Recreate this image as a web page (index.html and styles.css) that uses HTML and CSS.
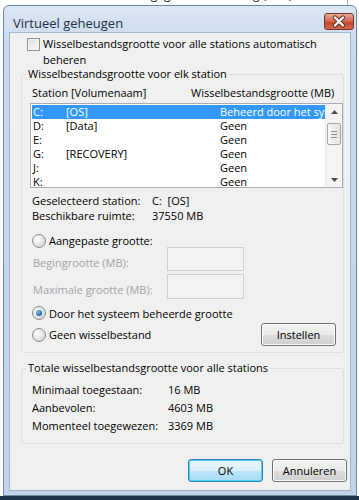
FILE: index.html
```html
<!DOCTYPE html>
<html lang="nl">
<head>
    <meta charset="UTF-8">
    <title>Virtueel geheugen</title>
    <link rel="stylesheet" href="styles.css">
</head>
<body>
    <div class="backdrop"><span>Prestatie van gegevensuitvoering (DEP)</span></div>

    <div class="window">
        <div class="titlebar">
            <span class="title">Virtueel geheugen</span>
            <span class="close">
                <svg width="28" height="15" viewBox="0 0 28 15">
                    <path d="M10 3.5 L18 11.5 M18 3.5 L10 11.5" stroke="#5a2a20" stroke-width="4.2" stroke-linecap="round"/>
                    <path d="M10 3.5 L18 11.5 M18 3.5 L10 11.5" stroke="#fff" stroke-width="2.4" stroke-linecap="round"/>
                </svg>
            </span>
        </div>

        <div class="client">
            <div class="check-row">
                <span class="checkbox"></span>
                <span>Wisselbestandsgrootte voor alle stations automatisch<br>beheren</span>
            </div>

            <fieldset class="group">
                <legend>Wisselbestandsgrootte voor elk station</legend>
                <div class="group-body">
                    <div class="list-head">
                        <span class="col-station">Station [Volumenaam]</span>
                        <span>Wisselbestandsgrootte (MB)</span>
                    </div>
                    <div class="listbox">
                        <div class="rows">
                            <div class="row selected"><span class="drive">C:</span><span class="name">[OS]</span><span>Beheerd door het systeem</span></div>
                            <div class="row"><span class="drive">D:</span><span class="name">[Data]</span><span>Geen</span></div>
                            <div class="row"><span class="drive">E:</span><span class="name"></span><span>Geen</span></div>
                            <div class="row"><span class="drive">G:</span><span class="name">[RECOVERY]</span><span>Geen</span></div>
                            <div class="row"><span class="drive">J:</span><span class="name"></span><span>Geen</span></div>
                            <div class="row"><span class="drive">K:</span><span class="name"></span><span>Geen</span></div>
                        </div>
                        <div class="scrollbar">
                            <div class="arrow">
                                <svg width="7" height="4" viewBox="0 0 7 4"><path d="M0 4 L3.5 0 L7 4 Z" fill="#4d4d4d"/></svg>
                            </div>
                            <div class="thumb"><i></i><i></i><i></i></div>
                            <div class="track"></div>
                            <div class="arrow">
                                <svg width="7" height="4" viewBox="0 0 7 4"><path d="M0 0 L7 0 L3.5 4 Z" fill="#4d4d4d"/></svg>
                            </div>
                        </div>
                    </div>

                    <div class="info">
                        <span>Geselecteerd station:</span><span>C:&nbsp;&nbsp;[OS]</span>
                        <span>Beschikbare ruimte:</span><span>37550 MB</span>
                    </div>

                    <div class="radio-row first">
                        <span class="radio"></span>
                        <span>Aangepaste grootte:</span>
                    </div>
                    <div class="size-row">
                        <span class="size-label">Begingrootte (MB):</span>
                        <span class="textbox"></span>
                    </div>
                    <div class="size-row second">
                        <span class="size-label">Maximale grootte (MB):</span>
                        <span class="textbox"></span>
                    </div>
                    <div class="radio-row system">
                        <span class="radio checked"></span>
                        <span>Door het systeem beheerde grootte</span>
                    </div>
                    <div class="radio-row none">
                        <span class="radio"></span>
                        <span class="grow">Geen wisselbestand</span>
                        <button class="btn set">Instellen</button>
                    </div>
                </div>
            </fieldset>

            <fieldset class="group total">
                <legend>Totale wisselbestandsgrootte voor alle stations</legend>
                <div class="totals">
                    <span>Minimaal toegestaan:</span><span>16 MB</span>
                    <span>Aanbevolen:</span><span>4603 MB</span>
                    <span>Momenteel toegewezen:</span><span>3369 MB</span>
                </div>
            </fieldset>

            <div class="actions">
                <button class="btn default">OK</button>
                <button class="btn">Annuleren</button>
            </div>
        </div>
    </div>
    <div class="taskbar"></div>
</body>
</html>
```

FILE: styles.css
```css
body {
    margin: 0;
    width: 359px;
    height: 500px;
    overflow: hidden;
    background: #fff;
    font-family: "Open Sans", "Noto Sans", sans-serif;
    font-size: 11px;
    color: #000;
}
.backdrop {
    height: 5px;
    overflow: hidden;
    padding-left: 75px;
    background: linear-gradient(to right, transparent 347px, #a9a9a9 347px, #a9a9a9 348px, transparent 348px);
}
.backdrop span {
    display: block;
    margin-top: -12px;
    line-height: 14px;
    font-size: 12px;
    color: #222;
    white-space: nowrap;
}
.window {
    margin-left: 3px;
    width: 354px;
    height: 491px;
    box-sizing: border-box;
    border: 1px solid #6f8aa6;
    border-radius: 6px 6px 0 0;
    background: linear-gradient(#dce7f5, #c9d9ed 40px, #c3d4ea);
    padding: 0 5px 4px 5px;
    display: flex;
    flex-direction: column;
}
.titlebar {
    height: 26px;
    display: flex;
    align-items: flex-start;
    justify-content: space-between;
}
.title {
    padding: 8px 0 0 4px;
    font-size: 13px;
    line-height: 18px;
    color: #1d2f45;
}
.close {
    margin-top: 7px;
    margin-right: -3px;
    width: 28px;
    height: 15px;
    border: 1px solid #74352a;
    border-radius: 3px;
    background: linear-gradient(#e9a796, #d5654d 50%, #c2432d 51%, #d7694b);
    display: flex;
}
.client {
    flex: 1;
    background: #f0f0f0;
    border: 1px solid #a3b5ca;
    display: flex;
    flex-direction: column;
}
.check-row {
    display: flex;
    margin-top: 3px;
    padding-left: 17px;
    line-height: 16px;
}
.checkbox {
    width: 11px;
    height: 11px;
    margin: 2px 3px 0 0;
    border: 1px solid #8f8f8f;
    background: linear-gradient(135deg, #dcdcdc, #fbfbfb);
    box-shadow: inset 0 0 0 1px #f4f4f4;
}
.group {
    margin: -1px 6px 0 11px;
    padding: 0;
    min-width: 0;
    border: 1px solid #dcdfe3;
    border-radius: 3px;
}
.group legend {
    margin-left: 4px;
    padding: 0 2px;
    line-height: 14px;
}
.group-body {
    padding: 5px 0 6px 8px;
}
.list-head {
    display: flex;
    padding-left: 2px;
    line-height: 14px;
}
.col-station {
    width: 159px;
}
.listbox {
    margin-top: 3px;
    height: 85px;
    box-sizing: border-box;
    border: 1px solid #a8abb3;
    background: #fff;
    display: flex;
}
.rows {
    flex: 1;
    min-width: 0;
    padding: 1px 0 0 1px;
    overflow: hidden;
}
.row {
    display: flex;
    height: 14px;
    line-height: 14px;
    padding-left: 1px;
    white-space: nowrap;
    overflow: hidden;
}
.row.selected {
    background: #3399ff;
    color: #fff;
}
.drive {
    width: 33px;
    flex: none;
}
.name {
    width: 154px;
    flex: none;
}
.scrollbar {
    width: 16px;
    flex: none;
    background: #f4f4f4;
    border-left: 1px solid #ececec;
    display: flex;
    flex-direction: column;
}
.arrow {
    height: 15px;
    display: flex;
    align-items: center;
    justify-content: center;
}
.thumb {
    margin: 4px 1px 0;
    height: 22px;
    box-sizing: border-box;
    border: 1px solid #a6a6a6;
    border-radius: 2px;
    background: linear-gradient(to right, #f6f6f6, #e4e4e4);
    display: flex;
    flex-direction: column;
    align-items: center;
    justify-content: center;
    gap: 2px;
}
.thumb i {
    width: 6px;
    height: 1px;
    background: #8c8c8c;
}
.track {
    flex: 1;
}
.info {
    margin-top: 5px;
    padding-left: 2px;
    display: grid;
    grid-template-columns: 120px auto;
    line-height: 15px;
}
.radio-row {
    display: flex;
    align-items: center;
    padding-left: 2px;
    height: 13px;
}
.radio-row.first {
    margin-top: 11px;
}
.radio-row.system {
    margin-top: 7px;
    height: 14px;
}
.radio-row.none {
    margin-top: 3px;
    height: 23px;
    padding-right: 7px;
}
.radio {
    width: 12px;
    height: 12px;
    margin-right: 3px;
    border-radius: 50%;
    border: 1px solid #8a8a8a;
    background: radial-gradient(circle at 35% 35%, #fefefe, #d6d6d6 80%);
    flex: none;
    display: flex;
    align-items: center;
    justify-content: center;
}
.radio.checked::after {
    content: '';
    width: 6px;
    height: 6px;
    border-radius: 50%;
    background: radial-gradient(circle at 35% 35%, #7fc0ff, #1b5ea8 70%);
}
.grow {
    flex: 1;
}
.size-row {
    display: flex;
    height: 24px;
    padding-left: 3px;
}
.size-row.second {
    margin-top: 3px;
    height: 25px;
}
.size-label {
    width: 134px;
    padding-top: 9px;
    line-height: 14px;
    color: #a3a3a3;
}
.textbox {
    width: 77px;
    box-sizing: border-box;
    border: 1px solid #cdd0d4;
    background: #f2f2f2;
}
.btn {
    width: 75px;
    height: 23px;
    box-sizing: border-box;
    padding: 0;
    border: 1px solid #707070;
    border-radius: 3px;
    background: linear-gradient(#f3f3f3, #ebebeb 50%, #dddddd 51%, #cfcfcf);
    box-shadow: inset 0 0 0 1px #fcfcfc;
    font-family: inherit;
    font-size: 11px;
    color: #000;
}
.btn.default {
    border-color: #3c7fb1;
    box-shadow: inset 0 0 0 1px #48d1fb;
    background: linear-gradient(#eaf6fd, #d9f0fc 50%, #bee6fd 51%, #a7d9f5);
}
.group.total {
    margin-top: 8px;
}
.totals {
    padding: 6px 0 8px 10px;
    display: grid;
    grid-template-columns: 136px auto;
    line-height: 18px;
}
.actions {
    margin-top: 15px;
    padding-right: 3px;
    display: flex;
    justify-content: flex-end;
    gap: 9px;
}
.taskbar {
    height: 4px;
    background: #1d3648;
}
```
